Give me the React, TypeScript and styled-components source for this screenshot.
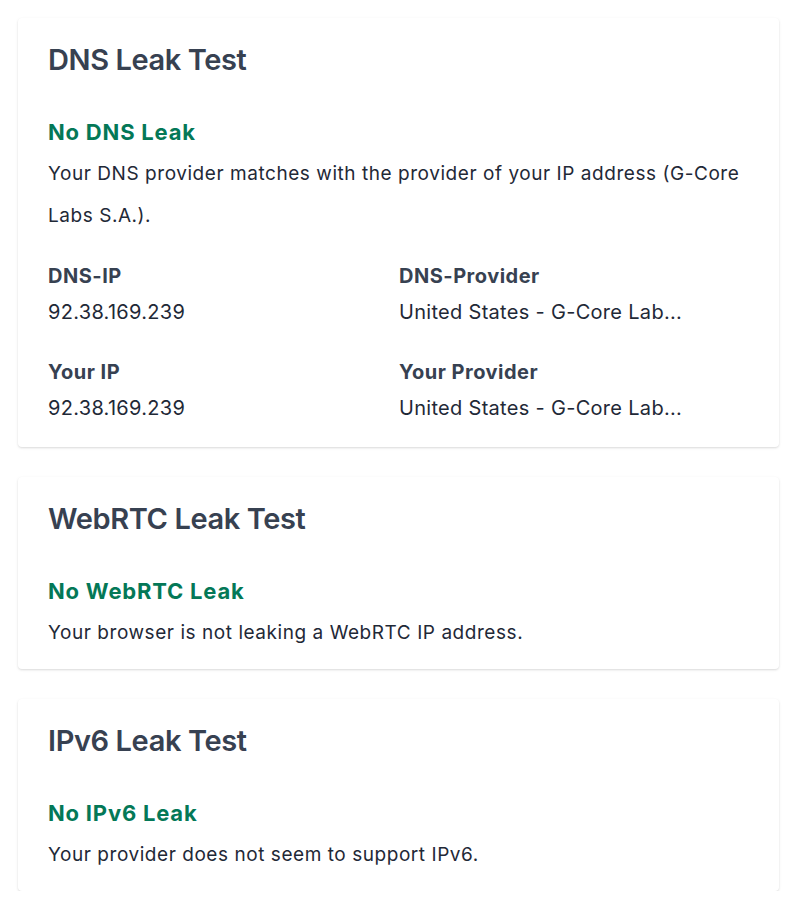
import React from "react";
import styled, { createGlobalStyle } from "styled-components";

const GlobalStyle = createGlobalStyle`
  * { box-sizing: border-box; }
  body {
    margin: 0;
    background: #ffffff;
    font-family: Inter, "Noto Sans", "Liberation Sans", sans-serif;
    -webkit-font-smoothing: antialiased;
  }
`;

const Page = styled.main`
  display: flex;
  flex-direction: column;
  gap: 30px;
  width: 761px;
  margin: 18px 0 0 18px;
`;

const Card = styled.section`
  background: #ffffff;
  border-radius: 4px;
  box-shadow: 0 1px 3px rgba(0, 0, 0, 0.1), 0 1px 2px rgba(0, 0, 0, 0.06);
  padding: 24px 8px 15px 30px;
`;

const Title = styled.h2`
  margin: 0;
  font-size: 29px;
  line-height: 36px;
  font-weight: 600;
  letter-spacing: -0.4px;
  color: #374151;
`;

const Status = styled.h3`
  margin: 33px 0 0;
  font-size: 22px;
  line-height: 42px;
  font-weight: 700;
  letter-spacing: 0.8px;
  color: #047857;
`;

const Text = styled.p`
  margin: 0;
  font-size: 19px;
  line-height: 42px;
  letter-spacing: 0.55px;
  color: #1f2937;
`;

const Grid = styled.dl`
  display: grid;
  grid-template-columns: 351px 1fr;
  row-gap: 24px;
  margin: 21px 0 6px;
`;

const Field = styled.div`
  display: flex;
  flex-direction: column;
  min-width: 0;
`;

const Label = styled.dt`
  font-size: 20px;
  line-height: 36px;
  font-weight: 700;
  letter-spacing: 0.5px;
  color: #374151;
`;

const Value = styled.dd`
  margin: 0;
  font-size: 20px;
  line-height: 36px;
  letter-spacing: 0.3px;
  color: #1f2937;
  white-space: nowrap;
`;

type Info = { label: string; value: string };

const dnsInfo: Info[] = [
  { label: "DNS-IP", value: "92.38.169.239" },
  { label: "DNS-Provider", value: "United States - G-Core Lab..." },
  { label: "Your IP", value: "92.38.169.239" },
  { label: "Your Provider", value: "United States - G-Core Lab..." },
];

const LeakCard: React.FC<{
  title: string;
  status: string;
  text: string;
  info?: Info[];
}> = ({ title, status, text, info }) => (
  <Card>
    <Title>{title}</Title>
    <Status>{status}</Status>
    <Text>{text}</Text>
    {info && (
      <Grid>
        {info.map((item) => (
          <Field key={item.label}>
            <Label>{item.label}</Label>
            <Value>{item.value}</Value>
          </Field>
        ))}
      </Grid>
    )}
  </Card>
);

export default function App() {
  return (
    <>
      <GlobalStyle />
      <Page>
        <LeakCard
          title="DNS Leak Test"
          status="No DNS Leak"
          text="Your DNS provider matches with the provider of your IP address (G-Core Labs S.A.)."
          info={dnsInfo}
        />
        <LeakCard
          title="WebRTC Leak Test"
          status="No WebRTC Leak"
          text="Your browser is not leaking a WebRTC IP address."
        />
        <LeakCard
          title="IPv6 Leak Test"
          status="No IPv6 Leak"
          text="Your provider does not seem to support IPv6."
        />
      </Page>
    </>
  );
}
